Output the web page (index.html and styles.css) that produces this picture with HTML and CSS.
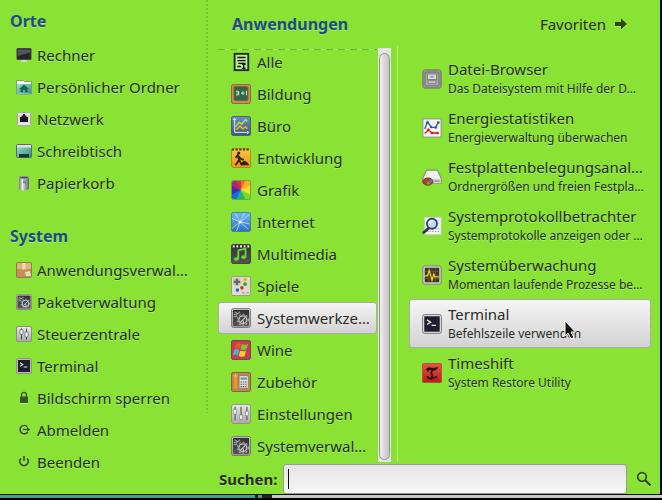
FILE: index.html
```html
<!DOCTYPE html>
<html lang="de">
<head>
<meta charset="utf-8">
<meta name="viewport" content="width=device-width, initial-scale=1">
<title>Menü</title>
<link rel="stylesheet" href="styles.css">
</head>
<body>
<svg class="defs" aria-hidden="true">
  <defs>
    <linearGradient id="silver" x1="0" y1="0" x2="0" y2="1"><stop offset="0" stop-color="#e8e8e8"/><stop offset="1" stop-color="#a9a9a9"/></linearGradient>
    <linearGradient id="dark" x1="0" y1="0" x2="0" y2="1"><stop offset="0" stop-color="#303034"/><stop offset="1" stop-color="#55555a"/></linearGradient>
    <linearGradient id="teal" x1="0" y1="0" x2="1" y2="1"><stop offset="0" stop-color="#a5e0cf"/><stop offset="1" stop-color="#2f8f83"/></linearGradient>
    <linearGradient id="blue" x1="0" y1="0" x2="0" y2="1"><stop offset="0" stop-color="#79b8ea"/><stop offset="1" stop-color="#2a72c0"/></linearGradient>
    <linearGradient id="slate" x1="0" y1="0" x2="0" y2="1"><stop offset="0" stop-color="#7190b5"/><stop offset="1" stop-color="#3d5878"/></linearGradient>
    <linearGradient id="amber" x1="0" y1="0" x2="0" y2="1"><stop offset="0" stop-color="#fcc945"/><stop offset="1" stop-color="#e8921a"/></linearGradient>
    <linearGradient id="red" x1="0" y1="0" x2="0" y2="1"><stop offset="0" stop-color="#e95048"/><stop offset="1" stop-color="#b51d1d"/></linearGradient>
    <linearGradient id="metal"><stop offset="0" stop-color="#777"/><stop offset=".35" stop-color="#eee"/><stop offset=".6" stop-color="#aaa"/><stop offset="1" stop-color="#666"/></linearGradient>
    <clipPath id="tile"><rect x="1" y="1" width="20" height="20" rx="2"/></clipPath>
  </defs>
  <symbol id="gears" viewBox="0 0 22 22">
    <rect x=".5" y=".5" width="21" height="21" rx="2.5" fill="url(#silver)" stroke="#737373"/>
    <rect x="2" y="2" width="18" height="18" rx="1.5" fill="url(#dark)"/>
    <circle cx="13" cy="13" r="4.300" fill="none" stroke="#c0c0c0" stroke-width="1.500"/>
    <circle cx="13" cy="13" r="6" fill="none" stroke="#a5a5a5" stroke-width="1.400" stroke-dasharray="1.900 2"/>
    <path d="M10 16l6-6M13 13l1 4" stroke="#ccc" stroke-width="1.200"/>
    <path d="M3 7q4 1 7-3M3 9.500q3 0 4-1M4 4l4 3" stroke="#999" stroke-width="1.400" fill="none"/>
  </symbol>
  <symbol id="sliders" viewBox="0 0 22 22">
    <rect x=".5" y=".5" width="21" height="21" rx="2.500" fill="url(#silver)" stroke="#8c8c8c"/>
    <path d="M4.500 3v15M11 3v15M17.500 3v15" stroke="#555" stroke-width="1.2"/>
    <path d="M3 6h3v5H3zM9.500 12h3v5h-3zM16 8h3v5h-3z" fill="#fff" stroke="#777" stroke-width=".7"/>
  </symbol>
  <symbol id="terminal" viewBox="0 0 22 22">
    <rect x=".6" y=".6" width="20.800" height="20.800" rx="2.500" fill="#ddd" stroke="#777"/>
    <rect x="2.500" y="2.500" width="17" height="17" fill="#211e2b"/>
    <path d="M5.500 6.500l4 2.500-4 2.500M10.500 12.500h5" stroke="#eee" stroke-width="1.4" fill="none"/>
  </symbol>
</svg>

<main class="menu">
  <div class="panes">
    <nav class="side">
      <section>
        <h2>Orte</h2>
        <ul>
          <li><a href="#"><svg viewBox="0 0 16 16"><rect x="1" y="1.500" width="14" height="11" rx=".5" fill="#27272a" stroke="#454548"/><path d="M2 2.500h12v3L2 9z" fill="#55565a"/><path d="M6 13h4l1 2H5z" fill="#ddd"/></svg>Rechner</a></li>
          <li><a href="#"><svg viewBox="0 0 16 16"><path d="M.5 1.500h7l1 1h7V15H.5z" fill="#f3f7f5" stroke="#6b8f63" stroke-width=".8"/><path d="M1 5h14v9.500H1z" fill="url(#teal)"/><path d="M8 5.500l5 4.500h-1.500v3H9v-2H7v2H4.500v-3H3z" fill="#11665c"/></svg>Persönlicher Ordner</a></li>
          <li><a href="#"><svg viewBox="0 0 16 16"><rect x="1.500" y="1.500" width="13" height="13" rx="1" fill="#e6e1e5" stroke="#a9a9a9"/><path d="M4 6h1.500V4.500H7V3h2v1.500h1.500V6H12v5H4z" fill="#171717"/></svg>Netzwerk</a></li>
          <li><a href="#"><svg viewBox="0 0 16 16"><rect x=".5" y="1.500" width="15" height="13" rx="1" fill="url(#teal)" stroke="#526d6a"/><path d="M1 2h14v2.500H1z" fill="#e5dfe3"/><path d="M3 11h10v3.500H3z" fill="#173936"/></svg>Schreibtisch</a></li>
          <li><a href="#"><svg viewBox="0 0 16 16"><path d="M3 2q5-2 10 0v12q-5 3-10 0z" fill="url(#metal)"/><ellipse cx="8" cy="2.500" rx="4.700" ry="1.500" fill="#555" stroke="#bbb" stroke-width=".7"/><path d="M7 5l3 1v3L7 8z" fill="#46a99c"/></svg>Papierkorb</a></li>
        </ul>
      </section>
      <section>
        <h2>System</h2>
        <ul>
          <li><a href="#"><svg viewBox="0 0 16 16"><rect x=".5" y=".5" width="15" height="15" rx="1" fill="#c58e5b" stroke="#9b744d"/><path d="M1 1h14v6H1z" fill="#dfb480"/><path d="M6.500 1h3v7l-1-1-1 1-1-1z" fill="#f1dcaf"/><path d="M9 10l5-1 1 5h-5z" fill="#d5e8b0"/></svg>Anwendungsverwal…</a></li>
          <li><a href="#"><svg><use href="#gears"/></svg>Paketverwaltung</a></li>
          <li><a href="#"><svg viewBox="0 0 16 16"><rect x=".5" y=".5" width="15" height="15" rx="1.500" fill="url(#silver)" stroke="#8c8c8c"/><path d="M5.500 2.500v11M10.500 2.500v11" stroke="#444"/><rect x="4" y="3.500" width="3" height="5" rx="1" fill="#fff" stroke="#555" stroke-width=".7"/><rect x="9" y="6" width="3" height="5" rx="1" fill="#fff" stroke="#555" stroke-width=".7"/></svg>Steuerzentrale</a></li>
          <li><a href="#"><svg><use href="#terminal"/></svg>Terminal</a></li>
          <li><a href="#"><svg class="glyph" viewBox="0 0 16 16"><path d="M4 6.500h8V13H4z" fill="#37561c"/><path d="M5.700 7V4.500Q5.700 2.500 8 2.500t2.300 2V7" fill="none" stroke="#37561c" stroke-width="1.400"/></svg>Bildschirm sperren</a></li>
          <li><a href="#"><svg class="glyph" viewBox="0 0 16 16"><path d="M11.300 4.800A4.200 4.200 0 1 0 11.800 10M7 7.500h6.500" fill="none" stroke="#37561c" stroke-width="1.700"/><path d="M11 5l3 2.500-3 2.500z" fill="#37561c"/></svg>Abmelden</a></li>
          <li><a href="#"><svg class="glyph" viewBox="0 0 16 16"><path d="M5 4.300a4.300 4.300 0 1 0 6 0M8 2v5" fill="none" stroke="#37561c" stroke-width="1.700"/></svg>Beenden</a></li>
        </ul>
      </section>
    </nav>

    <section class="apps">
      <h2>Anwendungen</h2>
      <div class="scroller">
        <ul>
          <li><a href="#"><svg viewBox="0 0 22 22"><rect x="4" y="2" width="15" height="18" fill="#b8ee87" stroke="#1c2b0c" stroke-width="2"/><path d="M7 6h9M7 9.500h9M8 12.500h8M7 16h4M12 13.500h4M14 13v5M12 18h4" stroke="#111" stroke-width="1.600"/></svg>Alle</a></li>
          <li><a href="#"><svg viewBox="0 0 22 22"><rect x=".5" y=".5" width="21" height="21" rx="2" fill="#c58e58" stroke="#89603a"/><rect x="3.500" y="3" width="15" height="15" rx="1" fill="#2f6848" stroke="#775232"/><path d="M5.500 8h3v4h-3M6 10h2.500M11 10h4M13 8v4M17 7.500v5" stroke="#c7efbb" stroke-width="1.100" fill="none"/></svg>Bildung</a></li>
          <li><a href="#"><svg viewBox="0 0 22 22"><rect x=".5" y=".5" width="21" height="21" rx="2" fill="url(#slate)" stroke="#405b79"/><path d="M4 2v16h16M2.500 4.500L4 2.500l1.500 2M17.500 16.500L19.500 18l-2 1.500" fill="none" stroke="#dce8f2" stroke-width="1.100"/><path d="M5 12l4-5 3 2 4-5 2 2" fill="none" stroke="#b5e851" stroke-width="1.500"/><path d="M6 15l4-4 3 3 3-2 2 2" fill="none" stroke="#f3b523" stroke-width="1.700"/></svg>Büro</a></li>
          <li><a href="#"><svg viewBox="0 0 22 22"><rect x=".5" y=".5" width="21" height="21" rx="2" fill="url(#amber)" stroke="#bb7d19"/><path d="M1 1.700h20" stroke="#423313" stroke-width="2" stroke-dasharray="2.500 1.500"/><circle cx="8.500" cy="5.500" r="1.700" fill="#30230e"/><path d="M8 7l-3 4M7.500 8l1.500 5-4 6M9 13l3 6M8 9l3 3 3 1" stroke="#30230e" stroke-width="2" fill="none"/><path d="M11 19q1-5 4-5 3 1 5 5z" fill="#30230e"/></svg>Entwicklung</a></li>
          <li><a href="#"><svg viewBox="0 0 22 22"><g clip-path="url(#tile)"><path d="M11 11L11-4h8z" fill="#ff6535"/><path d="M11 11l7-15 9 8z" fill="#ffad2a"/><path d="M11 11l16-8v8z" fill="#ffd52d"/><path d="M11 11h16v9z" fill="#ddec28"/><path d="M11 11l16 8-8 8z" fill="#80d72b"/><path d="M11 11l8 16h-8z" fill="#25bd42"/><path d="M11 11v16H2z" fill="#1aaab5"/><path d="M11 11L3 27l-8-9z" fill="#1d6add"/><path d="M11 11l-16 8v-8z" fill="#3130b8"/><path d="M11 11H-5V2z" fill="#642296"/><path d="M11 11L-5 3l9-8z" fill="#ad237e"/><path d="M11 11L3-5h8z" fill="#e42c35"/></g><rect x=".5" y=".5" width="21" height="21" rx="2" fill="none" stroke="#555" stroke-opacity=".5"/></svg>Grafik</a></li>
          <li><a href="#"><svg viewBox="0 0 22 22"><rect x=".5" y=".5" width="21" height="21" rx="2" fill="url(#blue)" stroke="#3d78b4"/><path d="M1 7l9 4L20 3M10 11L6 21M10 11l9 8M5 2l5 9 10 2M1 18l9-7 5-10" stroke="#d7edff" stroke-opacity=".75" fill="none"/><circle cx="10" cy="11" r="1.500" fill="#fff"/></svg>Internet</a></li>
          <li><a href="#"><svg viewBox="0 0 22 22"><rect x=".5" y=".5" width="21" height="21" rx="2" fill="url(#dark)" stroke="#3c3c3c"/><path d="M2 2.500h18" stroke="#eee" stroke-width="2.500" stroke-dasharray="2 2"/><path d="M8 16V7l8-2v9" fill="none" stroke="#6cd433" stroke-width="2"/><ellipse cx="6" cy="16.500" rx="2.800" ry="2" fill="#6cd433"/><ellipse cx="14" cy="14.500" rx="2.800" ry="2" fill="#6cd433"/></svg>Multimedia</a></li>
          <li><a href="#"><svg viewBox="0 0 22 22"><rect x=".5" y=".5" width="21" height="21" rx="2" fill="#deddcd" stroke="#96958a"/><circle cx="6.500" cy="6.500" r="4.500" fill="#c3c3b8"/><path d="M6.500 3v7M3 6.500h7" stroke="#666" stroke-width="2.500"/><circle cx="15.500" cy="4" r="2" fill="#efb21b"/><circle cx="15.500" cy="9" r="2" fill="#2aa928"/><circle cx="12" cy="13" r="2" fill="#dd2b23"/><circle cx="7" cy="15.500" r="2" fill="#2364d5"/><path d="M12 18.500h3M17 18.500h3" stroke="#888"/></svg>Spiele</a></li>
          <li><a href="#" class="raised" aria-current="true"><svg><use href="#gears"/></svg>Systemwerkze…</a></li>
          <li><a href="#"><svg viewBox="0 0 22 22"><rect x=".5" y=".5" width="21" height="21" rx="2" fill="#bd4057" stroke="#8a3142"/><path d="M5.500 4q3-2 5.500 0l-1.500 6q-3-2-5.500 0z" fill="#ef5123"/><path d="M12 4.500q3 2 7-.5l-2 6q-3 2-6.500 0z" fill="#83c536"/><path d="M3.500 11q3-2 5.500 0l-1.500 6q-3-2-5.500 0z" fill="#58a9e5"/><path d="M10 11.500q3 2 6.500 0l-1.500 6q-3 2-6.500 0z" fill="#f7ce30"/></svg>Wine</a></li>
          <li><a href="#"><svg viewBox="0 0 22 22"><rect x=".5" y=".5" width="21" height="21" rx="2" fill="#ba8752" stroke="#805932"/><path d="M3.500 6L5 2l1.500 4v12h-3z" fill="#f59a22"/><path d="M3.500 5L5 1.500 6.500 5z" fill="#f1d4a5"/><rect x="9" y="4" width="10" height="14" rx="1" fill="#dedfd8" stroke="#777" stroke-width=".7"/><path d="M10.500 6h7v2.500h-7z" fill="#63a18e"/><path d="M10.500 11h7M10.500 13.500h7M10.500 16h7" stroke="#555" stroke-width="1.300" stroke-dasharray="1.500 1"/></svg>Zubehör</a></li>
          <li><a href="#"><svg><use href="#sliders"/></svg>Einstellungen</a></li>
          <li><a href="#"><svg><use href="#gears"/></svg>Systemverwal…</a></li>
        </ul>
        <div class="track"><div class="thumb"></div></div>
      </div>
    </section>

    <section class="results">
      <button type="button" class="favorites">Favoriten<svg class="glyph" viewBox="0 0 14 14"><path d="M1 5h6V1.500L13 7l-6 5.500V9H1z" fill="#2c4814"/></svg></button>
      <ul>
        <li><a href="#"><svg viewBox="0 0 22 22"><rect x="1" y="1" width="20" height="20" rx="2" fill="#999" stroke="#686868"/><rect x="3.500" y="3.500" width="15" height="15" rx="1" fill="#aaa" stroke="#6d6d6d"/><rect x="6" y="5.500" width="10" height="6" fill="#ddd" stroke="#777"/><path d="M9 8.500h4" stroke="#7b9fca" stroke-width="2"/><path d="M6 13h10l-1.500 3h-7z" fill="#ccc" stroke="#666" stroke-width=".8"/></svg><span><b>Datei-Browser</b><small>Das Dateisystem mit Hilfe der D…</small></span></a></li>
        <li><a href="#"><svg viewBox="0 0 22 22"><rect x="1" y="1" width="20" height="20" fill="#f4f4f4" stroke="#8c8c8c"/><path d="M3 12l3-8 4 6 5 .5 3-6" fill="none" stroke="#315a98" stroke-width="1.500"/><path d="M3 17l4-4 4 3.500h7" fill="none" stroke="#d51919" stroke-width="1.500"/><g fill="#315a98"><circle cx="6" cy="5" r="1.400"/><circle cx="10" cy="10" r="1.400"/><circle cx="15" cy="10.500" r="1.400"/><circle cx="18" cy="5" r="1.400"/></g><g fill="#d51919"><circle cx="7" cy="13" r="1.500"/><circle cx="11" cy="16.500" r="1.500"/><circle cx="17" cy="16.500" r="1.500"/></g></svg><span><b>Energiestatistiken</b><small>Energieverwaltung überwachen</small></span></a></li>
        <li><a href="#"><svg viewBox="0 0 22 22"><path d="M5 3.500h12l4 9v5.500H1v-5.500z" fill="#f0eff0" stroke="#777"/><path d="M1.500 13h19v5h-19z" fill="#d0d0d0"/><path d="M14 15.500h6" stroke="#777" stroke-width="2" stroke-dasharray="1 1"/><ellipse cx="6.500" cy="16" rx="5.500" ry="4" fill="#b3402b" stroke="#76291e"/><path d="M6.500 16l4-2.500q2 2 0 4z" fill="#4c83aa"/><path d="M6.500 16l3 3H5z" fill="#87a93f"/></svg><span><b>Festplattenbelegungsanal…</b><small>Ordnergrößen und freien Festpla…</small></span></a></li>
        <li><a href="#"><svg viewBox="0 0 22 22"><path d="M3 1.500h18v19H3z" fill="#f4f4f4" stroke="#ccc"/><path d="M5 14h14M5 17h14M15 5h4M15 8h4" stroke="#aaa" stroke-dasharray="2 1"/><path d="M8 13l-7 6" stroke="#333" stroke-width="3"/><circle cx="11" cy="8.500" r="5.500" fill="#cadcf1" stroke="#25428b" stroke-width="2"/><path d="M8 8q1-3 4-3" stroke="#fff" stroke-width="1.500" fill="none"/></svg><span><b>Systemprotokollbetrachter</b><small>Systemprotokolle anzeigen oder …</small></span></a></li>
        <li><a href="#"><svg viewBox="0 0 22 22"><rect x="1" y="1" width="20" height="20" rx="2" fill="#ddd" stroke="#777"/><path d="M3 3h16v16H3z" fill="#39331f"/><path d="M7 3v16M11 3v16M15 3v16M3 7h16M3 11h16M3 15h16" stroke="#74653b" stroke-width=".7"/><path d="M3 12h3l2-6 3 11 2-7 1 3h5" fill="none" stroke="#f3c82b" stroke-width="1.400"/></svg><span><b>Systemüberwachung</b><small>Momentan laufende Prozesse be…</small></span></a></li>
        <li><a href="#" class="raised" aria-current="true"><svg><use href="#terminal"/></svg><span><b>Terminal</b><small>Befehlszeile verwenden</small></span></a>
          <svg class="pointer" viewBox="0 0 12 20" aria-hidden="true"><path d="M1 1v15l3-3 3 6 3-1.500-3-5.500h4.500z" fill="#111" stroke="#fff"/></svg></li>
        <li><a href="#"><svg viewBox="0 0 22 22"><rect x=".5" y=".5" width="21" height="21" rx="1.500" fill="url(#red)" stroke="#b64a42"/><path d="M5 7.500Q5 4.500 9 5.500q4 1.200 8-.5-1 3.500-5 2.700Q7 6.500 6.500 9z" fill="#260808" stroke="#260808"/><path d="M12 8q-3 2.500-1 4.500 1 2-1 3.500M5.500 14.500q2.500 4 6 2.500 3-2 5-1.500" fill="none" stroke="#260808" stroke-width="1.700"/></svg><span><b>Timeshift</b><small>System Restore Utility</small></span></a></li>
      </ul>
    </section>
  </div>

  <form class="search">
    <label for="query">Suchen:</label>
    <div class="field"><input id="query" type="text" autocomplete="off"><i class="caret"></i></div>
    <button type="button" aria-label="Suchen"><svg class="glyph" viewBox="0 0 16 16"><circle cx="6" cy="6" r="4.300" fill="none" stroke="#2c4814" stroke-width="1.700"/><path d="M9 9l5.500 5.500" stroke="#2c4814" stroke-width="2.200"/></svg></button>
  </form>
</main>
<div class="panel-edge"></div>
</body>
</html>
```
FILE: styles.css
```css
* {
  box-sizing: border-box;
}

body {
  margin: 0;
  background: #000;
  color: #2a2d26;
  font: 15px/20px "Noto Sans", "Open Sans", sans-serif;
}

ul {
  margin: 0;
  padding: 0;
  list-style: none;
}

a {
  color: inherit;
  text-decoration: none;
  white-space: nowrap;
}

button {
  padding: 0;
  border: 0;
  background: none;
  color: inherit;
  font: inherit;
}

h2 {
  margin: 0;
  color: #204a87;
  font-size: 16px;
  line-height: 24px;
}

svg {
  flex: none;
}

.defs {
  position: absolute;
  width: 0;
  height: 0;
}

.menu {
  margin-right: 1px;
  border-right: 1px solid #111;
  border-bottom: 1px solid #111;
  background: #8ae234;
  text-shadow: 0 1px #a6ee65;
}

.panes {
  display: grid;
  grid-template-columns: 208px 190px 1fr;
}

/* The last entry reaches down beside the search row. */
.side {
  display: flex;
  flex-direction: column;
  gap: 25px;
  margin-bottom: -20px;
  padding: 9px 0 0 10px;
  background: repeating-linear-gradient(#75c82c 0 2px, transparent 2px 4px) right top / 2px 413px no-repeat;
}

.side ul {
  padding-top: 6px;
}

.side a {
  display: flex;
  align-items: center;
  gap: 5px;
  height: 32px;
  padding-left: 6px;
}

.side svg {
  width: 16px;
  height: 16px;
}

.apps {
  padding-left: 10px;
}

.apps h2 {
  padding: 12px 0 10px 14px;
}

.scroller {
  display: flex;
  gap: 1px;
  margin-bottom: 2px;
  padding-right: 6px;
  border-right: 1px solid #b5ed7d;
}

.scroller ul {
  flex: 1;
  min-width: 0;
  background: repeating-linear-gradient(90deg, #6eb82b 0 7px, #a6ee65 7px 12px) left 3px / 100% 1px no-repeat;
}

.apps a {
  display: flex;
  align-items: center;
  gap: 6px;
  height: 32px;
  padding: 0 6px 0 12px;
  border: 1px solid transparent;
}

.apps a svg {
  width: 20px;
  height: 20px;
}

.raised {
  border-color: #aaa !important;
  border-radius: 3px;
  background: linear-gradient(#f5f5f5, #d3d3d3);
  text-shadow: none;
}

.track {
  flex: none;
  width: 13px;
  margin-top: 2px;
  padding: 5px 1px 2px;
  background: #e5e5e5;
}

.thumb {
  height: 100%;
  border: 1px solid #929292;
  border-radius: 6px;
  background: linear-gradient(90deg, #eee, #c4c4c4);
}

.results {
  padding: 14px 9px 0 11px;
}

.favorites {
  display: flex;
  align-items: center;
  gap: 8px;
  margin-left: auto;
  margin-right: 23px;
}

.favorites svg {
  width: 14px;
  height: 14px;
}

.results ul {
  padding-top: 20px;
}

.results li {
  position: relative;
}

.results a {
  display: flex;
  align-items: center;
  gap: 6px;
  height: 49px;
  padding: 0 5px 0 12px;
  border: 1px solid transparent;
}

.results a svg {
  width: 20px;
  height: 20px;
}

.results b,
.results small {
  display: block;
  font-size: 15px;
  font-weight: 400;
  line-height: 20px;
}

.results small {
  font-size: 12px;
}

.pointer {
  position: absolute;
  top: 21px;
  left: 155px;
  width: 12px;
  height: 20px;
}

.search {
  display: flex;
  align-items: center;
  gap: 6px;
  padding: 0 8px 0 219px;
}

.search label {
  font-weight: 700;
}

.field {
  position: relative;
  flex: 1;
}

.field input {
  display: block;
  width: 100%;
  height: 30px;
  padding: 0 4px;
  border: 1px solid #999;
  border-radius: 3px;
  outline: 0;
  background: linear-gradient(#e5e5e5, #f6f6f6);
  font: inherit;
}

.caret {
  position: absolute;
  top: 5px;
  left: 5px;
  width: 1px;
  height: 20px;
  background: #111;
}

.search button {
  display: flex;
  padding-left: 3px;
}

.search svg {
  width: 16px;
  height: 16px;
}

.glyph {
  filter: drop-shadow(0 1px #aef070);
}

.panel-edge {
  height: 3px;
  background: linear-gradient(90deg, #4b9a91 0 255px, #222 255px 258px, #4b9a91 258px 262px, #222 262px 272px, #c8c8c8 272px);
}
```
